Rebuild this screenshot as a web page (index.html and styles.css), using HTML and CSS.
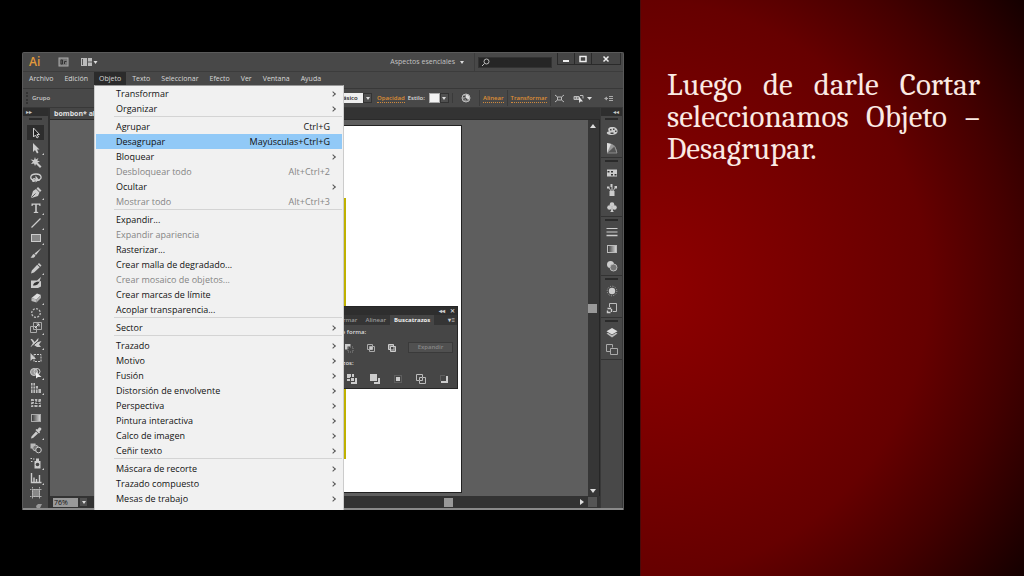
FILE: index.html
```html
<!DOCTYPE html>
<html lang="es">
<head>
    <meta charset="UTF-8">
    <title>Desagrupar</title>
    <link rel="stylesheet" href="styles.css">
</head>
<body>
    <div class="slide">
        <div class="shot">
            <div class="app">
                <!-- barra de título -->
                <header class="titlebar">
                    <span class="logo">Ai</span>
                    <button class="tb-btn bridge" aria-label="Bridge"><svg width="11" height="10" viewBox="0 0 11 10"><rect x="1" y="1" width="9" height="8" fill="#777" stroke="#aaa"/><path d="M3 3v4h1.500v-4zM6.500 7V4.500h2" stroke="#333" fill="none"/></svg></button>
                    <button class="tb-btn" aria-label="Organizar documentos"><svg width="17" height="10" viewBox="0 0 17 10"><rect x="0" y="1" width="11" height="8" fill="#bbb"/><path d="M1.500 2v6M6.500 1v8M7 5h4" stroke="#555"/><path d="M12.500 4h4l-2 3z" fill="#ddd"/></svg></button>
                    <button class="workspace-btn">Aspectos esenciales <i class="tri"></i></button>
                    <label class="search">
                        <svg width="9" height="9" viewBox="0 0 9 9"><circle cx="5.500" cy="3.500" r="2.500" fill="none" stroke="#bbb"/><path d="M3.500 5.500L1 8" stroke="#bbb"/></svg>
                        <input type="text" aria-label="Buscar">
                    </label>
                    <div class="win-btns">
                        <button aria-label="Minimizar"><svg width="10" height="8" viewBox="0 0 10 8"><path d="M2 5h6v2H2z" fill="#eee"/></svg></button>
                        <button aria-label="Maximizar"><svg width="10" height="8" viewBox="0 0 10 8"><path d="M2 1.500h6v5H2z" fill="none" stroke="#eee" stroke-width="1.500"/></svg></button>
                        <button class="close" aria-label="Cerrar"><svg width="10" height="8" viewBox="0 0 10 8"><path d="M2.500 1.500l5 5M7.500 1.500l-5 5" stroke="#eee" stroke-width="1.500"/></svg></button>
                    </div>
                </header>

                <!-- menú principal -->
                <nav>
                    <ul class="menubar">
                        <li><button>Archivo</button></li>
                        <li><button>Edición</button></li>
                        <li>
                            <button class="open">Objeto</button>
                            <ul class="dropdown">
                                <li><button class="sub">Transformar</button></li>
                                <li><button class="sub">Organizar</button></li>
                                <li class="line"></li>
                                <li><button>Agrupar <span>Ctrl+G</span></button></li>
                                <li><button class="active">Desagrupar <span>Mayúsculas+Ctrl+G</span></button></li>
                                <li><button class="sub">Bloquear</button></li>
                                <li><button disabled>Desbloquear todo <span>Alt+Ctrl+2</span></button></li>
                                <li><button class="sub">Ocultar</button></li>
                                <li><button disabled>Mostrar todo <span>Alt+Ctrl+3</span></button></li>
                                <li class="line"></li>
                                <li><button>Expandir...</button></li>
                                <li><button disabled>Expandir apariencia</button></li>
                                <li><button>Rasterizar...</button></li>
                                <li><button>Crear malla de degradado...</button></li>
                                <li><button disabled>Crear mosaico de objetos...</button></li>
                                <li><button>Crear marcas de límite</button></li>
                                <li><button>Acoplar transparencia...</button></li>
                                <li class="line"></li>
                                <li><button class="sub">Sector</button></li>
                                <li class="line"></li>
                                <li><button class="sub">Trazado</button></li>
                                <li><button class="sub">Motivo</button></li>
                                <li><button class="sub">Fusión</button></li>
                                <li><button class="sub">Distorsión de envolvente</button></li>
                                <li><button class="sub">Perspectiva</button></li>
                                <li><button class="sub">Pintura interactiva</button></li>
                                <li><button class="sub">Calco de imagen</button></li>
                                <li><button class="sub">Ceñir texto</button></li>
                                <li class="line"></li>
                                <li><button class="sub">Máscara de recorte</button></li>
                                <li><button class="sub">Trazado compuesto</button></li>
                                <li><button class="sub">Mesas de trabajo</button></li>
                                <li><button class="sub">Gráfico</button></li>
                            </ul>
                        </li>
                        <li><button>Texto</button></li>
                        <li><button>Seleccionar</button></li>
                        <li><button>Efecto</button></li>
                        <li><button>Ver</button></li>
                        <li><button>Ventana</button></li>
                        <li><button>Ayuda</button></li>
                    </ul>
                </nav>

                <!-- panel de control -->
                <div class="control">
                    <span class="kind">Grupo</span>
                    <div class="brush">
                        <select aria-label="Pincel"><option>Básico</option></select>
                        <span class="drop"><i class="tri"></i></span>
                    </div>
                    <a href="#">Opacidad</a>
                    <span class="label">Estilo:</span>
                    <button class="swatch" aria-label="Estilo"><b></b><span class="drop"><i class="tri"></i></span></button>
                    <button class="recolor" aria-label="Volver a colorear"><svg width="10" height="10" viewBox="0 0 10 10"><circle cx="5" cy="5" r="4" fill="#888" stroke="#bbb"/><path d="M5 1.500a3.500 3.500 0 0 1 3 5L5 5z" fill="#ddd"/><path d="M2 3.500h2M2.500 6.500L5 5.500l1 2" stroke="#444" fill="none"/></svg></button>
                    <span class="cell"><a href="#">Alinear</a></span>
                    <span class="cell"><a href="#">Transformar</a></span>
                    <div class="cell ctl-icons">
                        <button aria-label="Aislar"><svg width="11" height="9" viewBox="0 0 11 9"><path d="M1 1l2.500 2M10 1L7.500 3M1 8l2.500-2M10 8L7.500 6M3.500 3h4v3h-4z" fill="none" stroke="#bbb"/></svg></button>
                        <button aria-label="Seleccionar similares"><svg width="20" height="9" viewBox="0 0 20 9"><path d="M1 2.500h5v3H1zM1 4h5M3.500 2.500v3M7 1.500h3v3" stroke="#bbb" fill="none"/><path d="M6 2.500V9l1.500-1.500h2.500z" fill="#ddd"/><path d="M14 3h5l-2.500 3z" fill="#ddd"/></svg></button>
                        <button class="last" aria-label="Opciones del panel"><svg width="10" height="7" viewBox="0 0 10 7"><path d="M0 3.500l3-2v4z" fill="#aaa"/><path d="M2 3.500h2M5 1.500h4M5 3.500h4M5 5.500h4" stroke="#aaa"/></svg></button>
                    </div>
                </div>

                <div class="work">
                    <!-- herramientas -->
                    <aside class="tools">
                        <div class="bar-head">▸▸</div>
                        <div class="grip"></div>
                        <button class="on" aria-label="Selección"><svg viewBox="0 0 12 12"><path d="M3.500 1v9l2-2 1.500 3 1.500-1-1.500-2.500H9.500z" fill="#222" stroke="#ccc"/></svg></button>
                        <button class="more" aria-label="Selección directa"><svg viewBox="0 0 12 12"><path d="M3 1v9l2-2 2 3.500 1.500-1L7 7.500h2.500z"/></svg></button>
                        <button aria-label="Varita mágica"><svg viewBox="0 0 12 12"><path d="M5 0l.8 2.500L8.500 1 7.200 3.600 10 4.500 7.500 5.500l4 4-1.500 1.500-4-4L5 9 4 6.500 1 7l2-2.500L.500 2.500 4 3z"/></svg></button>
                        <button aria-label="Lazo"><svg viewBox="0 0 12 12"><path d="M4 8.500C-1 7 0 2 6 2s6.500 5 2.500 6M3 7c2-1 3 1 1.500 2S2 9 3 7" fill="none" stroke="#ccc" stroke-width="1.300"/><path d="M5.500 3.500v7l2-1.500h2.500z"/></svg></button>
                        <button class="more" aria-label="Pluma"><svg viewBox="0 0 12 12"><path d="M8 0l3.500 3.500-1.500 1.500L6.500 1.500zM6 2l3.500 3.500L8 9 1.500 11l-.5-.5L3 4z"/><path d="M1.500 10.500L5.500 6.500" stroke="#444" stroke-width=".8"/></svg></button>
                        <button class="more" aria-label="Texto"><svg viewBox="0 0 12 12"><path d="M1.500 1.500h9v2.500h-1l-.5-1.300H6.800v7l1.400.4v.9H3.800v-.9l1.400-.4v-7H3L2.500 4h-1z"/></svg></button>
                        <button class="more" aria-label="Línea"><svg viewBox="0 0 12 12"><path d="M1.500 10.500l9-9" stroke="#ccc" stroke-width="1.200"/></svg></button>
                        <button class="more" aria-label="Rectángulo"><svg viewBox="0 0 12 12"><rect x="1.500" y="2.500" width="9" height="7" fill="#888" stroke="#ccc"/></svg></button>
                        <button aria-label="Pincel"><svg viewBox="0 0 12 12"><path d="M11.500 1L6 8 4.500 6.500zM4 7l1.500 1.500C4.500 11 3 11 .500 10.500 2 10 2 7.500 4 7z"/></svg></button>
                        <button class="more" aria-label="Lápiz"><svg viewBox="0 0 12 12"><path d="M9 1l2.500 2.500-1.200 1.200-2.500-2.500zM7.200 2.800l2.500 2.500L4 10.500 1 11.500 1.800 8.500z"/></svg></button>
                        <button aria-label="Pincel de manchas"><svg viewBox="0 0 12 12"><path d="M1 3.500h6L11 0 9.500 4.500 11 4v5.500L8 11H1z"/><path d="M3 8.500C4 5 6 5 9.500 4.500 9 7 6 9 3 8.500z" fill="#333"/></svg></button>
                        <button class="more" aria-label="Borrador"><svg viewBox="0 0 12 12"><path d="M7 1.500l4 1.500-4.500 4.500-5-1.500z" fill="#ddd"/><path d="M11 3v3L6.500 10.500v-3z" fill="#aaa"/><path d="M1.500 6l5 1.500v3L1.500 9z" fill="#bbb"/></svg></button>
                        <button class="more" aria-label="Rotar"><svg viewBox="0 0 12 12"><circle cx="6" cy="6" r="4.300" fill="none" stroke="#bbb" stroke-width="1.300" stroke-dasharray="2 1.300"/></svg></button>
                        <button class="more" aria-label="Escala"><svg viewBox="0 0 12 12"><path d="M3.500.500h8v7h-8zM.500 4.500h6v6h-6z" fill="none" stroke="#aaa"/><path d="M5 6l4-4M6.500 2H9v2.500" fill="none" stroke="#ddd"/></svg></button>
                        <button class="more" aria-label="Anchura"><svg viewBox="0 0 12 12"><path d="M.500 2c3 0 3 2 4 3 2-1 2-3 4-4L8 5l3.500-1L9 7.500l2 2.500H7L4 8l-3.500 2L3 6z"/><path d="M2 9.500L9.500 3" stroke="#444"/></svg></button>
                        <button aria-label="Transformación libre"><svg viewBox="0 0 12 12"><path d="M4 2.500h7v7H4z" fill="none" stroke="#ccc" stroke-dasharray="2 1"/><path d="M.500 1v8l2-2h3.500z"/></svg></button>
                        <button class="more" aria-label="Creador de formas"><svg viewBox="0 0 12 12"><circle cx="4" cy="5" r="3.500" fill="#999" stroke="#ccc"/><circle cx="7" cy="4.500" r="3" fill="none" stroke="#ccc"/><path d="M6 5v6.500l2-1.500h3.500z" fill="#eee"/></svg></button>
                        <button class="more" aria-label="Cuadrícula de perspectiva"><svg viewBox="0 0 12 12"><path d="M1 1h4v3h3v3h3v4H1z" fill="#bbb"/><path d="M1 4h4M1 7h7M3 1v10M5.500 4v7M8 7v4" fill="none" stroke="#444" stroke-width=".8"/></svg></button>
                        <button aria-label="Malla"><svg viewBox="0 0 12 12"><rect x="1" y="2" width="10" height="8" fill="#bbb"/><path d="M1 5c3-2 6 2 10 0M1 8c4-2 6 1 10-1M4 2c2 3-1 5 0 8M8 2c-1 3 1 5 0 8" fill="none" stroke="#333"/></svg></button>
                        <button aria-label="Degradado"><svg viewBox="0 0 12 12"><defs><linearGradient id="gr"><stop stop-color="#333"/><stop offset="1" stop-color="#ddd"/></linearGradient></defs><rect x="1.500" y="2.500" width="9" height="7" fill="url(#gr)" stroke="#aaa"/></svg></button>
                        <button class="more" aria-label="Cuentagotas"><svg viewBox="0 0 12 12"><path d="M9 .500c2-.5 3 1 2 2.500L9.500 4.500l.5 1-1 1L5.500 3l1-1 1 .5zM6 4.500l2 2L3 11l-2 .5.500-2z"/></svg></button>
                        <button aria-label="Fusión"><svg viewBox="0 0 12 12"><rect x=".500" y="1.500" width="5" height="5" fill="#bbb"/><circle cx="5.500" cy="6" r="2.800" fill="#777" stroke="#bbb"/><circle cx="8.500" cy="8" r="2.800" fill="#444" stroke="#ccc"/></svg></button>
                        <button class="more" aria-label="Rociar símbolos"><svg viewBox="0 0 12 12"><path d="M4.500 4h6v7.500h-6zM6 1.500h3V4H6zM.500 1h1.500v1H.500zM3 1.500h1.500v1H3zM1 4h1.500v1H1z"/><circle cx="7.500" cy="7.500" r="1.800" fill="#444"/></svg></button>
                        <button class="more" aria-label="Gráfico de columnas"><svg viewBox="0 0 12 12"><path d="M1.500 1v9.500h10M4 10V5.500M6.500 10V7M9.500 10V3" fill="none" stroke="#ccc" stroke-width="1.400"/></svg></button>
                        <button aria-label="Mesa de trabajo"><svg viewBox="0 0 12 12"><rect x="2.500" y="2.500" width="7" height="7" fill="#888" stroke="#bbb"/><path d="M2.500 0v12M9.500 0v12M0 2.500h12M0 9.500h12" stroke="#aaa" stroke-dasharray="1.500 1"/></svg></button>
                        <button aria-label="Sector"><svg viewBox="0 0 12 12"><path d="M6 4l2-2h4l-2 4-3 1z" fill="#999"/></svg></button>
                    </aside>

                    <!-- documento -->
                    <main class="doc">
                        <div class="tabs"><button>bombon* al</button></div>
                        <div class="view">
                            <div class="canvas">
                                <div class="artboard"><div class="shape"></div></div>
                                <section class="palette">
                                    <div class="pal-head">◂◂ <span>✕</span></div>
                                    <div class="pal-tabs">
                                        <button>Transformar</button>
                                        <button>Alinear</button>
                                        <button class="on">Buscatrazos</button>
                                        <span class="pal-menu">▾≡</span>
                                    </div>
                                    <p>Modos de forma:</p>
                                    <div class="pal-row">
                                        <button aria-label="Unificar"><svg viewBox="0 0 10 10"><path d="M1 1h5v3h3v5H4V6H1z"/></svg></button>
                                        <button aria-label="Menos frente"><svg viewBox="0 0 10 10"><path d="M1 1h5.500v2.500h-3v3H1z"/><path d="M4 4h5v5H4z" fill="none" stroke="#888" stroke-dasharray="1 1"/></svg></button>
                                        <button aria-label="Formar intersección"><svg viewBox="0 0 10 10"><path d="M1.500 1.500h5v5h-5zM3.500 3.500h5v5h-5z" fill="none" stroke="#aaa"/><path d="M4 4h2.500v2.500H4z"/></svg></button>
                                        <button aria-label="Excluir"><svg viewBox="0 0 10 10"><path d="M1.500 1.500h5v5h-5zM3.500 3.500h5v5h-5z" fill="#888" stroke="#ccc"/><path d="M4 4h2.500v2.500H4z" fill="#444"/></svg></button>
                                        <button class="expand" disabled>Expandir</button>
                                    </div>
                                    <p>Buscatrazos:</p>
                                    <div class="pal-row">
                                        <button aria-label="Dividir"><svg viewBox="0 0 10 10"><path d="M0 0h4v3H3v1H0zM5 0h2v3H5zM0 5h3v2H0zM4 4h3v3H4zM8 4h2v6H4V8h4z"/></svg></button>
                                        <button aria-label="Cortar"><svg viewBox="0 0 10 10"><path d="M0 0h7v7H0zM8 4h2v6H4V8h4z"/></svg></button>
                                        <button aria-label="Combinar"><svg viewBox="0 0 10 10"><path d="M1.500 1.500h7v7h-7z" fill="none" stroke="#777" stroke-dasharray="1 1"/><path d="M3 3h4v4H3z"/></svg></button>
                                        <button aria-label="Recortar"><svg viewBox="0 0 10 10"><path d="M3 6.500H.500v-6h6V3M3.500 3.500h3v3h-3zM7 3.500h2.500v6h-6V7" fill="none" stroke="#bbb"/></svg></button>
                                        <button aria-label="Contornear"><svg viewBox="0 0 10 10"><path d="M1.500 6.500v-5h5" fill="none" stroke="#777" stroke-dasharray="1 1"/><path d="M7 2h2v7H2V7h5z"/></svg></button>
                                    </div>
                                </section>
                            </div>
                            <div class="vscroll"><i class="up"></i><i class="thumb"></i><i class="down"></i></div>
                        </div>
                        <div class="status">
                            <select aria-label="Zoom"><option>76%</option></select>
                            <span class="drop"><i class="tri"></i></span>
                            <div class="hscroll"><i class="thumb"></i><i class="right"></i></div>
                            <span class="corner"></span>
                        </div>
                    </main>

                    <!-- paneles plegados -->
                    <aside class="dock">
                        <div class="bar-head">◂◂</div>
                        <div class="group">
                            <button aria-label="Color"><svg viewBox="0 0 12 12"><path d="M6 2c4 0 6 2 5.500 5-.5 3-7 4-10 2C0 8 1 6.500 3 6.500 1 4 3 2 6 2z"/><path d="M4 4h1.500v1.500H4zM7 3.500h1.500V5H7zM9 5.500h1.500V7H9zM4.500 7.500h3V9h-3z" fill="#444"/></svg></button>
                            <button aria-label="Guía de color"><svg viewBox="0 0 12 12"><path d="M1 1c6 0 10 4 10 10H1z" fill="#999"/><path d="M1 11V1l4 1z" fill="#ddd"/><path d="M1 11l7.500-7 2.500 7z" fill="#555" stroke="#999" stroke-width=".8"/></svg></button>
                        </div>
                        <div class="group">
                            <button aria-label="Muestras"><svg viewBox="0 0 12 12"><path d="M1 2.500h10v7H1z"/><path d="M1.500 4h2v1.500h-2zM5 4h2v1.500H5zM5 7h2v1.500H5zM8.500 7h2v1.500h-2z" fill="#333"/></svg></button>
                            <button aria-label="Pinceles"><svg viewBox="0 0 12 12"><path d="M3.500 7h5v5h-5zM5.500 3h1v4h-1zM4.500 0h2v3h-2zM1 2.500h2.500v2H1zM8.500 2H11v2.500H8.500z"/><path d="M3 4l2 3M9 4L7 7" stroke="#bbb"/></svg></button>
                            <button aria-label="Símbolos"><svg viewBox="0 0 12 12"><circle cx="6" cy="3.500" r="2.300"/><circle cx="3.500" cy="6.500" r="2.300"/><circle cx="8.500" cy="6.500" r="2.300"/><path d="M5.500 5h1l.5 5 1 1H4l1-1z"/></svg></button>
                        </div>
                        <div class="group">
                            <button aria-label="Trazo"><svg viewBox="0 0 12 12"><path d="M.500 2.500h11M.500 6h11" stroke="#ccc"/><path d="M.500 9.500h11" stroke="#ccc" stroke-width="1.500"/></svg></button>
                            <button aria-label="Degradado"><svg viewBox="0 0 12 12"><rect x="1.500" y="2.500" width="9" height="7" fill="url(#gr)" stroke="#bbb"/></svg></button>
                            <button aria-label="Transparencia"><svg viewBox="0 0 12 12"><circle cx="4.500" cy="4.500" r="3.500"/><circle cx="7.500" cy="7.500" r="3.500" fill="#777" stroke="#bbb"/></svg></button>
                        </div>
                        <div class="group">
                            <button aria-label="Apariencia"><svg viewBox="0 0 12 12"><circle cx="6" cy="6" r="3.200"/><circle cx="6" cy="6" r="4.800" fill="none" stroke="#aaa" stroke-dasharray="1 1.500"/></svg></button>
                            <button aria-label="Estilos gráficos"><svg viewBox="0 0 12 12"><path d="M3.500 5V1.500h7v8H7" fill="none" stroke="#bbb"/><path d="M1.500 6.500h3v-1M5.500 7v3M1.500 8.500v2h3" fill="none" stroke="#ccc" stroke-width="1.400"/></svg></button>
                        </div>
                        <div class="group">
                            <button aria-label="Capas"><svg viewBox="0 0 12 12"><path d="M6 1l5.500 3.200L6 7.500.500 4.200z" fill="#ddd"/><path d="M.500 6.500L2 5.800l4 2.400 4-2.400 1.500.7L6 10.500z" fill="#bbb"/></svg></button>
                            <button aria-label="Mesas de trabajo"><svg viewBox="0 0 12 12"><path d="M4.500 7.500h-4v-7h6v3M4.500 4.500h7v6h-7z" fill="none" stroke="#aaa"/></svg></button>
                        </div>
                    </aside>
                </div>
            </div>
        </div>
        <div class="side">
            <p>Luego de darle Cortar seleccionamos Objeto – Desagrupar.</p>
        </div>
    </div>
</body>
</html>
```
FILE: styles.css
```css
*,
*::before,
*::after {
    box-sizing: border-box;
}
body {
    margin: 0;
    background: #000;
    font-family: "Open Sans", "Noto Sans", sans-serif;
    font-size: 7px;
    color: #ccc;
}
ul {
    margin: 0;
    padding: 0;
    list-style: none;
}
button,
select,
input {
    margin: 0;
    padding: 0;
    border: 0;
    background: none;
    font: inherit;
    color: inherit;
    appearance: none;
}
svg {
    display: block;
}

.slide {
    display: grid;
    grid-template-columns: 5fr 3fr;
    height: 100vh;
}
.shot {
    padding: 52px 16px 66px 22px;
    min-width: 0;
    min-height: 0;
}
.side {
    padding: 69px 44px 0 26px;
    border-left: 1px solid #4a0a0a;
    background: radial-gradient(circle at 0 50%, #900000 0, #7a0000 32%, #660000 60%, #440000 78%, #140000 100%);
}
.side p {
    margin: 0;
    font-family: Cambria, "Liberation Serif", serif;
    font-size: 31px;
    line-height: 32px;
    text-align: justify;
    color: #fbeae4;
}

/* ventana */
.app {
    display: flex;
    flex-direction: column;
    height: 100%;
    overflow: hidden;
    border: 1px solid #5a5a5a;
    border-bottom: 0;
    border-radius: 2px 2px 0 0;
    background: #484848;
}
.titlebar {
    display: flex;
    align-items: center;
    height: 19px;
    padding-left: 6px;
    border-bottom: 1px solid #3c3c3c;
}
.logo {
    width: 29px;
    font-size: 12px;
    font-weight: 600;
    line-height: 18px;
    color: #e39a3b;
}
.bridge {
    margin-right: 12px;
}
.workspace-btn {
    display: flex;
    align-items: center;
    gap: 5px;
    margin-left: auto;
    padding-right: 10px;
    border-right: 1px solid #3c3c3c;
    line-height: 18px;
    color: #c4c4c4;
}
.tri {
    border: 2px solid transparent;
    border-top: 3px solid #ddd;
    border-bottom: 0;
}
.search {
    display: flex;
    align-items: center;
    width: 74px;
    height: 11px;
    margin: 0 5px 0 3px;
    padding-left: 2px;
    border: 1px solid #333;
    background: #262626;
}
.search input {
    width: 60px;
}
.win-btns {
    display: flex;
    align-self: flex-start;
    margin-right: 2px;
    border: 1px solid #2a2a2a;
    border-top: 0;
}
.win-btns button {
    display: flex;
    justify-content: center;
    align-items: center;
    width: 17px;
    height: 11px;
    border-right: 1px solid #2a2a2a;
    background: #454545;
}
.win-btns .close {
    width: 28px;
    border-right: 0;
}

.menubar {
    display: flex;
    gap: 1px;
    height: 16px;
    padding-left: 1px;
}
.menubar > li {
    position: relative;
}
.menubar > li > button {
    height: 13px;
    padding: 0 5px;
    line-height: 13px;
    color: #d8d8d8;
}
.menubar > li > .open {
    background: #2b2b2b;
}
.dropdown {
    position: absolute;
    z-index: 5;
    top: 13px;
    left: 0;
    width: 250px;
    padding: 0 1px;
    border: 1px solid #ccc;
    border-top-color: #999;
    background: #f1f1f1;
    font-size: 9px;
    color: #111;
}
.dropdown button {
    display: flex;
    justify-content: space-between;
    align-items: center;
    width: 100%;
    height: 15px;
    padding: 0 12px 0 20px;
    line-height: 15px;
}
.dropdown .active {
    background: #91c9f7;
}
.dropdown button:disabled {
    color: #858585;
}
.dropdown .sub::after {
    content: "";
    width: 4px;
    height: 4px;
    margin-right: -5px;
    border: solid #555;
    border-width: 1px 1px 0 0;
    transform: rotate(45deg);
}
.dropdown .line {
    height: 3px;
    margin-left: 18px;
    border-top: 1px solid #d4d4d4;
}

.control {
    display: flex;
    align-items: center;
    height: 20px;
    padding-left: 3px;
    border: 1px solid #383838;
    border-width: 1px 0;
    font-size: 6px;
    font-weight: 600;
}
.kind {
    margin-right: auto;
    padding-left: 4px;
    border-left: 2px dotted #333;
    line-height: 12px;
}
.control a {
    border-bottom: 1px dotted #d08a3c;
    line-height: 8px;
    color: #df8f35;
    text-decoration: none;
}
.brush,
.swatch {
    display: flex;
    height: 10px;
}
.brush {
    margin-right: 5px;
}
.brush select {
    width: 42px;
    padding-left: 18px;
    background: #eee;
    color: #222;
}
.drop {
    display: flex;
    justify-content: center;
    align-items: center;
    width: 9px;
    height: 10px;
    border: 1px solid #333;
    background: #505050;
}
.label {
    margin: 0 4px 0 3px;
    color: #ddd;
}
.swatch b {
    width: 11px;
    border: 1px solid #aaa;
    background: #f2f2f2;
}
.swatch {
    margin-right: 3px;
}
.recolor {
    padding: 0 8px;
    border-left: 1px solid #3a3a3a;
}
.cell {
    padding: 0 3px;
    border-left: 1px solid #3a3a3a;
    line-height: 16px;
}
.ctl-icons {
    display: flex;
    align-items: center;
    gap: 8px;
    height: 16px;
}
.ctl-icons .last {
    padding: 0 6px 0 3px;
}

.work {
    display: grid;
    grid-template-columns: 27px 1fr 23px;
    flex: 1;
    min-height: 0;
    border-bottom: 2px solid #8a8a8a;
}
.bar-head {
    height: 8px;
    padding: 0 3px;
    background: #2e2e2e;
    font-size: 6px;
    line-height: 8px;
}
.dock .bar-head {
    text-align: right;
}
.grip,
.group::before {
    display: block;
    content: "";
    width: 13px;
    height: 2px;
    margin: 2px auto;
    background: #2a2a2a;
}
.tools {
    overflow: hidden;
    border-right: 2px solid #303030;
}
.tools .grip {
    margin-bottom: 5px;
}
.tools button {
    position: relative;
    display: flex;
    justify-content: center;
    align-items: center;
    width: 17px;
    height: 15px;
    margin: 0 auto;
}
.tools .on {
    background: #2d2d2d;
}
.tools .more::after {
    position: absolute;
    right: 0;
    bottom: 0;
    content: "";
    border: 1px solid #ccc;
    border-top-color: transparent;
    border-left-color: transparent;
}
.tools svg,
.dock svg {
    width: 12px;
    height: 12px;
    fill: #ccc;
}

.doc {
    display: flex;
    flex-direction: column;
    min-width: 0;
    background: #333;
}
.tabs {
    height: 12px;
    border-bottom: 1px solid #2a2a2a;
}
.tabs button {
    width: 120px;
    height: 11px;
    padding-left: 4px;
    background: #464646;
    font-weight: 700;
    line-height: 11px;
    text-align: left;
    color: #e0e0e0;
}
.view {
    display: flex;
    flex: 1;
    min-height: 0;
}
.canvas {
    position: relative;
    flex: 1;
    background: #5e5e5e;
}
.artboard {
    position: absolute;
    top: 5px;
    right: 126px;
    bottom: 3px;
    left: 80px;
    border: solid #222;
    border-width: 1px 1px 1px 0;
    background: #fff;
}
.shape {
    position: absolute;
    top: 72px;
    right: 115px;
    width: 120px;
    height: 261px;
    background: #bfb100;
}
.vscroll {
    display: flex;
    flex-direction: column;
    justify-content: space-between;
    align-items: center;
    width: 12px;
    padding: 4px 2px 3px 0;
    border-right: 1px solid #262626;
    background: #363636;
}
.up,
.down,
.right {
    border: 3px solid transparent;
}
.up {
    border-top: 0;
    border-bottom: 4px solid #ddd;
}
.down {
    border-top: 4px solid #ddd;
    border-bottom: 0;
}
.right {
    border-left: 4px solid #ddd;
    border-right: 0;
}
.thumb {
    width: 9px;
    height: 9px;
    background: #999;
}
.status {
    display: flex;
    align-items: center;
    height: 12px;
}
.status select {
    width: 25px;
    height: 9px;
    margin: 0 1px 0 3px;
    padding-left: 1px;
    background: #999;
    line-height: 9px;
    color: #111;
}
.hscroll {
    display: flex;
    flex: 1;
    justify-content: flex-end;
    align-items: center;
    gap: 127px;
    padding-right: 4px;
}
.corner {
    width: 9px;
    height: 10px;
    margin-right: 3px;
    background: #555;
}

.palette {
    position: absolute;
    top: 186px;
    right: 130px;
    width: 144px;
    border: 1px solid #262626;
    background: #464646;
    font-size: 6px;
    font-weight: 600;
}
.pal-head {
    height: 8px;
    padding-right: 2px;
    background: #2e2e2e;
    line-height: 8px;
    text-align: right;
}
.pal-head span {
    margin-left: 3px;
}
.pal-tabs {
    display: flex;
    height: 10px;
    padding-left: 2px;
    background: #353535;
    line-height: 10px;
}
.pal-tabs button {
    padding: 0 4px;
    color: #999;
}
.pal-tabs .on {
    background: #464646;
    font-weight: 700;
    color: #eee;
}
.pal-menu {
    margin-left: auto;
    padding-right: 2px;
}
.palette p {
    margin: 0;
    padding-left: 2px;
    line-height: 14px;
    color: #ddd;
}
.pal-row {
    display: flex;
    justify-content: space-between;
    align-items: center;
    height: 17px;
    padding: 0 8px;
}
.pal-row:last-child {
    justify-content: flex-end;
    gap: 13px;
    height: 18px;
}
.pal-row svg {
    width: 10px;
    height: 10px;
    fill: #ccc;
}
.pal-row .expand {
    width: 45px;
    height: 11px;
    margin-right: -4px;
    border: 1px solid #3a3a3a;
    background: #505050;
    line-height: 9px;
    color: #888;
}

.dock {
    border: solid #383838;
    border-width: 0 1px;
}
.group {
    padding-bottom: 1px;
    border-bottom: 1px solid #333;
}
.group button {
    display: flex;
    justify-content: center;
    align-items: center;
    width: 100%;
    height: 17px;
}
```
